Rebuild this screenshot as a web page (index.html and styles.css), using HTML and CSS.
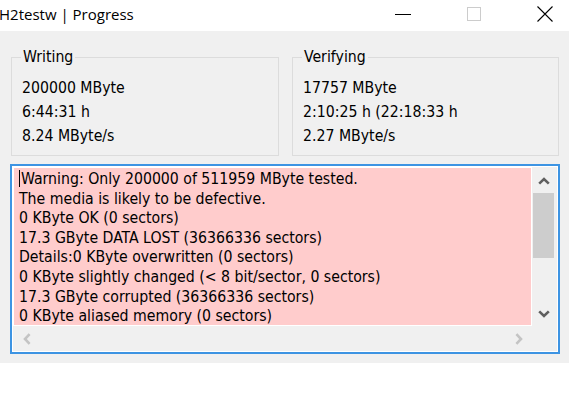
FILE: index.html
```html
<!DOCTYPE html>
<html>
<head>
<meta charset="utf-8">
<link rel="stylesheet" href="styles.css">
</head>
<body>
<div class="window">
  <div class="titlebar">
    <span class="title">H2testw | Progress</span>
    <div class="controls">
      <svg class="ctl" width="16" height="16" viewBox="0 0 16 16"><line x1="0" y1="8.5" x2="16" y2="8.5" stroke="#000" stroke-width="1"/></svg>
      <svg class="ctl" width="16" height="16" viewBox="0 0 16 16"><rect x="1.5" y="1.5" width="13" height="13" fill="none" stroke="#cccccc" stroke-width="1"/></svg>
      <svg class="ctl" width="16" height="16" viewBox="0 0 16 16"><path d="M0.5 0.5 L15.5 15.5 M15.5 0.5 L0.5 15.5" stroke="#000" stroke-width="1.1" fill="none"/></svg>
    </div>
  </div>
  <div class="client">
    <div class="groups">
      <fieldset class="group writing">
        <legend>Writing</legend>
        <div class="vals">
          <div>200000 MByte</div>
          <div>6:44:31 h</div>
          <div>8.24 MByte/s</div>
        </div>
      </fieldset>
      <fieldset class="group verifying">
        <legend>Verifying</legend>
        <div class="vals">
          <div>17757 MByte</div>
          <div>2:10:25 h (22:18:33 h</div>
          <div>2.27 MByte/s</div>
        </div>
      </fieldset>
    </div>
    <div class="log">
      <div class="log-body">
        <div class="text">
          <div><span class="caret"></span>Warning: Only 200000 of 511959 MByte tested.</div>
          <div>The media is likely to be defective.</div>
          <div>0 KByte OK (0 sectors)</div>
          <div>17.3 GByte DATA LOST (36366336 sectors)</div>
          <div>Details:0 KByte overwritten (0 sectors)</div>
          <div>0 KByte slightly changed (&lt; 8 bit/sector, 0 sectors)</div>
          <div>17.3 GByte corrupted (36366336 sectors)</div>
          <div>0 KByte aliased memory (0 sectors)</div>
        </div>
        <div class="vscroll">
          <div class="sbtn"><svg width="12" height="8" viewBox="0 0 12 8"><path d="M1.2 6.6 L6 2 L10.8 6.6" fill="none" stroke="#5f5f5f" stroke-width="2.6"/></svg></div>
          <div class="thumb"></div>
          <div class="track"></div>
          <div class="sbtn"><svg width="12" height="8" viewBox="0 0 12 8"><path d="M1.2 1.4 L6 6 L10.8 1.4" fill="none" stroke="#5f5f5f" stroke-width="2.6"/></svg></div>
        </div>
        <div class="hscroll">
          <div class="hbtn"><svg width="8" height="12" viewBox="0 0 8 12"><path d="M6.6 1.2 L2 6 L6.6 10.8" fill="none" stroke="#c4c4c4" stroke-width="2.6"/></svg></div>
          <div class="hbtn"><svg width="8" height="12" viewBox="0 0 8 12"><path d="M1.4 1.2 L6 6 L1.4 10.8" fill="none" stroke="#c4c4c4" stroke-width="2.6"/></svg></div>
        </div>
        <div class="corner"></div>
      </div>
    </div>
  </div>
</div>
</body>
</html>
```
FILE: styles.css
```css
html, body {
  margin: 0;
  padding: 0;
  background: #ffffff;
}
body {
  width: 576px;
  height: 407px;
  overflow: hidden;
  font-family: "DejaVu Sans Condensed", "DejaVu Sans", sans-serif;
  color: #000;
}
.titlebar {
  height: 31px;
  display: flex;
  align-items: center;
}
.title {
  font-family: "Open Sans", "Noto Sans", sans-serif;
  font-size: 15px;
  margin-left: -1px;
  margin-top: -3px;
}
.controls {
  margin-left: auto;
  margin-right: 23px;
  display: flex;
  gap: 55px;
  align-items: center;
  margin-top: -3px;
}
.ctl { display: block; }
.client {
  width: 569px;
  height: 332px;
  background: #f0f0f0;
  padding: 17px 0 0 10px;
  box-sizing: border-box;
}
.groups {
  display: flex;
  gap: 13px;
  margin-left: 1px;
}
.group {
  margin: 0;
  border: 1px solid #dcdcdc;
  padding: 0 9px 7px 9px;
  box-sizing: border-box;
  min-width: 0;
}
.writing { width: 268px; }
.verifying { width: 267px; }
.group legend {
  font-size: 15.7px;
  line-height: 18px;
  padding: 0 2px;
  margin-left: 0;
}
.vals {
  font-size: 15.7px;
  line-height: 24px;
  padding-top: 10px;
  margin-left: 1px;
  white-space: nowrap;
}
.log {
  margin-top: 8px;
  width: 550px;
  height: 190px;
  border: 2px solid #3d94e3;
  box-sizing: border-box;
  background: #ffffff;
  padding: 1px;
}
.log-body {
  display: grid;
  grid-template-columns: 519px 1fr;
  grid-template-rows: 159px 1fr;
  height: 100%;
  background: #f0f0f0;
}
.text {
  background: #ffcccc;
  border: 1px solid #ffffff;
  padding: 1px 0 0 5px;
  font-size: 15.7px;
  line-height: 19.6px;
  white-space: nowrap;
  overflow: hidden;
}
.caret {
  display: inline-block;
  width: 1px;
  height: 17px;
  background: #000;
  vertical-align: -3px;
  margin-right: 1px;
}
.vscroll {
  display: flex;
  flex-direction: column;
  padding-top: 1px;
}
.sbtn {
  height: 25px;
  display: flex;
  align-items: center;
  justify-content: center;
  padding-right: 2px;
}
.thumb {
  height: 65px;
  background: #cdcdcd;
  margin: 0 3px 0 1px;
}
.track { flex: 1; }
.hscroll {
  display: flex;
  justify-content: space-between;
  padding: 0 1px;
}
.hbtn {
  width: 25px;
  display: flex;
  align-items: center;
  justify-content: center;
}
.corner { background: #f0f0f0; }
```
